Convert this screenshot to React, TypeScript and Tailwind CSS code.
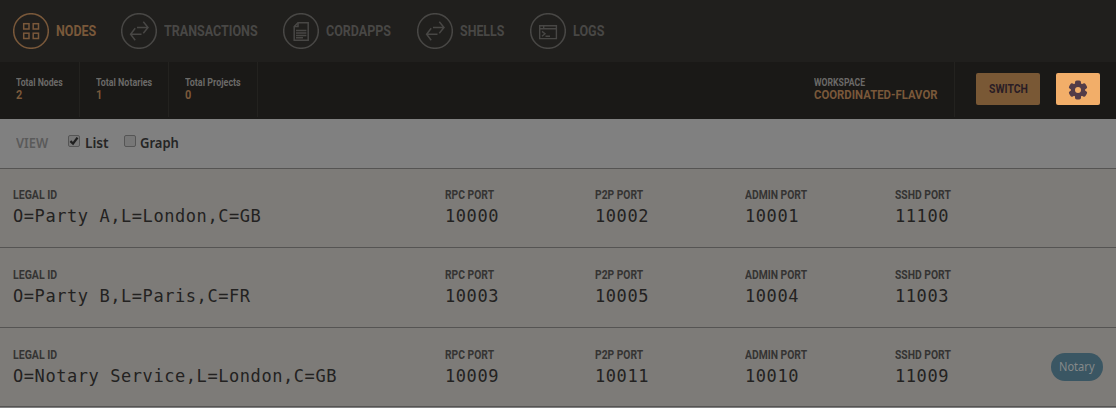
import { useLayoutEffect, useRef } from "react";
import type { ReactNode } from "react";

/* Sets a run of text in a condensed width, by scaling it to the given measure. */
function Fit({ w, className = "", children }: { w: number; className?: string; children: ReactNode }) {
  const ref = useRef<HTMLSpanElement>(null);
  useLayoutEffect(() => {
    const el = ref.current;
    if (!el) return;
    el.style.transform = `scaleX(${w / el.offsetWidth})`;
  }, [w]);
  return (
    <span className={`block whitespace-nowrap ${className}`} style={{ width: w }}>
      <span ref={ref} className="inline-block origin-left align-top">
        {children}
      </span>
    </span>
  );
}

const Grid = () => (
  <g strokeWidth="1.5">
    <rect x="10.7" y="10.7" width="5.3" height="5.3" />
    <rect x="20.2" y="10.7" width="5.3" height="5.3" />
    <rect x="10.7" y="20.2" width="5.3" height="5.3" />
    <rect x="20.2" y="20.2" width="5.3" height="5.3" />
  </g>
);
const Arrows = () => (
  <g strokeWidth="1.5">
    <path d="M16 14.5H27M22.3 8.8L27 14.5L22.3 20.3" />
    <path d="M20.5 21.3H9.6M14.2 15.3L9.6 21.3L14.2 27.2" />
  </g>
);
const Doc = () => (
  <g strokeWidth="1.5">
    <path d="M15 9.7H25.2V27.2H11.2V13.5Z" />
    <path d="M15 9.7V13.5H11.2M13 17.6H23.4M13 20H23.4M13 22.4H23.4M13 24.7H20" />
  </g>
);
const Terminal = () => (
  <g strokeWidth="1.4">
    <path d="M9.7 12.7H26.4V25.6H9.7ZM9.7 15.7H26.4M13.7 12.7V15.7M12 18.4L15 20.8L12 23.2M15.5 23.2H20" />
  </g>
);
const Gear = () => (
  <svg viewBox="0 0 20 20" className="size-[20px]" fill="#543c48">
    <circle cx="10" cy="10" r="7.2" />
    <rect x="7" y="0.5" width="6" height="19" rx="1.8" />
    <rect x="7" y="0.5" width="6" height="19" rx="1.8" transform="rotate(60 10 10)" />
    <rect x="7" y="0.5" width="6" height="19" rx="1.8" transform="rotate(120 10 10)" />
    <circle cx="10" cy="10" r="3" fill="#f2ae69" />
  </svg>
);

const tabs = [
  { label: "NODES", w: 40, box: "w-[108px]", icon: <Grid />, active: true },
  { label: "TRANSACTIONS", w: 93.5, box: "w-[162px]", icon: <Arrows /> },
  { label: "CORDAPPS", w: 65, box: "w-[134px]", icon: <Doc /> },
  { label: "SHELLS", w: 44.6, box: "w-[113px]", icon: <Arrows /> },
  { label: "LOGS", w: 31, box: "w-[80px]", icon: <Terminal /> },
];

const stats = [
  { label: "Total Nodes", value: "2", w: 47, box: "w-[80px]" },
  { label: "Total Notaries", value: "1", w: 56, box: "w-[89px]" },
  { label: "Total Projects", value: "0", w: 55.5, box: "w-[89px]" },
];

const rows = [
  { id: "O=Party A,L=London,C=GB", ports: ["10000", "10002", "10001", "11100"] },
  { id: "O=Party B,L=Paris,C=FR", ports: ["10003", "10005", "10004", "11003"] },
  { id: "O=Notary Service,L=London,C=GB", ports: ["10009", "10011", "10010", "11009"], notary: true },
];

const ports = [
  { label: "RPC PORT", w: 49 },
  { label: "P2P PORT", w: 48 },
  { label: "ADMIN PORT", w: 62 },
  { label: "SSHD PORT", w: 56 },
];

function Cell({ label, w, value }: { label: string; w: number; value: string }) {
  return (
    <div>
      <Fit w={w} className="text-[12px] leading-[16px] font-bold text-[#353433]">{label}</Fit>
      <div className="mt-[1px] font-['DejaVu_Sans_Mono',monospace] text-[17px] leading-[24px] tracking-[0.565px] whitespace-nowrap text-[#232221]">
        {value}
      </div>
    </div>
  );
}

function Box({ checked }: { checked?: boolean }) {
  return (
    <span className="flex size-[12px] items-center justify-center rounded-[2px] border border-[#555555] bg-[#777777]">
      {checked && (
        <svg viewBox="0 0 10 10" className="size-[10px]" fill="none" stroke="#1f1f1f" strokeWidth="2.3">
          <path d="M1.4 5.2L4 7.6L8.5 1.6" />
        </svg>
      )}
    </span>
  );
}

export default function App() {
  return (
    <div className="h-[408px] w-[1116px] overflow-hidden bg-[#808080] font-[Roboto,sans-serif]">
      <nav className="flex h-[62px] items-center bg-[#201f1d] pl-[13px]">
        {tabs.map((t) => (
          <div
            key={t.label}
            className={`${t.box} flex items-center gap-[7.4px] ${t.active ? "text-[#79583a]" : "text-[#484745]"}`}
          >
            <svg viewBox="0 0 36 36" className="size-[36px] shrink-0" fill="none" stroke="currentColor">
              <circle cx="18" cy="18" r="17.3" strokeWidth="1.5" />
              {t.icon}
            </svg>
            <Fit w={t.w} className="text-[15px] leading-[20px] font-bold">{t.label}</Fit>
          </div>
        ))}
      </nav>
      <header className="flex h-[57px] bg-[#1a1917]">
        {stats.map((s) => (
          <div key={s.label} className={`${s.box} h-[55px] border-r border-[#23221f] pt-[14px] pl-[16.4px]`}>
            <Fit w={s.w} className="text-[10px] leading-[13px] font-bold text-[#6b6a68]">{s.label}</Fit>
            <Fit w={6.4} className="text-[12px] leading-[12px] font-bold text-[#79583a]">{s.value}</Fit>
          </div>
        ))}
        <div className="ml-auto h-[55px] w-[141px] border-r border-[#23221f] pt-[14px]">
          <Fit w={51} className="text-[10px] leading-[13px] font-bold text-[#6b6a68]">WORKSPACE</Fit>
          <Fit w={124} className="text-[12px] leading-[12px] font-bold text-[#79583a]">COORDINATED-FLAVOR</Fit>
        </div>
        <button className="mt-[11px] ml-[21px] flex h-[32px] w-[64px] items-center justify-center rounded-[2px] bg-[#795835]">
          <Fit w={39} className="text-left text-[12px] leading-[16px] font-bold text-[#2a1d25]">SWITCH</Fit>
        </button>
        <button className="mt-[11px] mr-[16px] ml-[16px] flex h-[32px] w-[44px] items-center justify-center rounded-[2px] bg-[#f2ae69] pt-[1px]">
          <Gear />
        </button>
      </header>
      <div className="flex h-[50px] items-center border-b border-[#555453] pb-[2px] pl-[16px] font-['Noto_Sans',sans-serif] text-[14px] leading-[20px]">
        <Fit w={32} className="font-semibold text-[#5a5a5a]">VIEW</Fit>
        <div className="mb-[3px] ml-[20px]"><Box checked /></div>
        <Fit w={23.5} className="ml-[5px] font-semibold text-[#252525]">List</Fit>
        <div className="mb-[3px] ml-[15.5px]"><Box /></div>
        <Fit w={39} className="ml-[4.4px] font-semibold text-[#252525]">Graph</Fit>
      </div>
      {rows.map((r, i) => (
        <div
          key={r.id}
          className={`grid grid-cols-[432px_150px_150px_150px_150px_1fr] border-b border-[#555453] bg-[#7d7b78] pl-[13px] ${
            i === 0 ? "h-[79px] pt-[18px]" : i === 1 ? "h-[80px] pt-[19px]" : "h-[79px] pt-[19px]"
          }`}
        >
          <Cell label="LEGAL ID" w={44} value={r.id} />
          {ports.map((p, j) => (
            <Cell key={p.label} label={p.label} w={p.w} value={r.ports[j]} />
          ))}
          {r.notary && (
            <span className="mt-[6px] mr-[13px] flex h-[28px] w-[52px] items-center justify-center justify-self-end rounded-full bg-[#3a5663] font-['Noto_Sans',sans-serif] text-[12px] text-[#85898a]">
              <Fit w={36} className="text-left">Notary</Fit>
            </span>
          )}
        </div>
      ))}
    </div>
  );
}
